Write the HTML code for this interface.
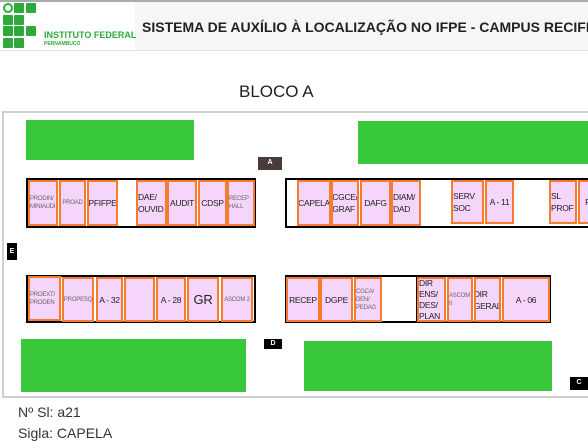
<!DOCTYPE html>
<html><head><meta charset="utf-8"><style>
*{margin:0;padding:0;box-sizing:border-box}
body{width:588px;height:440px;overflow:hidden;background:#fff;font-family:"Liberation Sans",Arial,sans-serif;position:relative}
.a{position:absolute}
.g{position:absolute;background:#38c83a}
.r{position:absolute;background:#f5d5f9;border:2px solid #f47c2c;display:flex;align-items:center;justify-content:center;text-align:left;color:#222;font-size:8.5px;letter-spacing:-0.3px;line-height:12px;overflow:hidden;white-space:normal}
.n{white-space:nowrap}
.s{font-size:6px;line-height:8px;color:#666;letter-spacing:-0.2px}
.b{position:absolute;border:2px solid #000;background:#fff}
.sq{position:absolute;width:10px;height:10px;background:#2eaa3a;border-radius:1px}
.lbl{position:absolute;color:#fff;font-size:7px;font-weight:bold;text-align:center;line-height:12px}
</style></head><body>
<div class="a" style="left:0;top:0;width:588px;height:2px;background:#aaa"></div>
<div class="a" style="left:135px;top:2px;width:453px;height:48px;background:#f6f6f6"></div>
<div class="a" style="left:0;top:50px;width:588px;height:1px;background:#e2e2e2"></div>
<div class="a" style="left:3px;top:3px;width:10px;height:10px;border:2px solid #2eaa3a;border-radius:50%"></div>
<div class="sq" style="left:14px;top:3px"></div><div class="sq" style="left:26px;top:3px"></div>
<div class="sq" style="left:3px;top:15px"></div><div class="sq" style="left:14px;top:15px"></div>
<div class="sq" style="left:3px;top:26px"></div><div class="sq" style="left:14px;top:26px"></div><div class="sq" style="left:26px;top:26px"></div>
<div class="sq" style="left:3px;top:38px"></div><div class="sq" style="left:14px;top:38px"></div>
<div class="a" style="left:44px;top:30px;font-size:9px;font-weight:bold;color:#2eaa3a">INSTITUTO FEDERAL</div>
<div class="a" style="left:44px;top:41px;font-size:5px;font-weight:bold;color:#2eaa3a">PERNAMBUCO</div>
<div class="a" style="left:142px;top:19px;font-size:14px;font-weight:bold;color:#222;white-space:nowrap">SISTEMA DE AUXÍLIO À LOCALIZAÇÃO NO IFPE - CAMPUS RECIFE</div>
<div class="a" style="left:239px;top:82px;font-size:17px;color:#222">BLOCO A</div>
<div class="a" style="left:2px;top:111px;width:600px;height:287px;border:2px solid #d0d0d0;border-right:none"></div>
<div class="g" style="left:26px;top:120px;width:168px;height:40px"></div>
<div class="g" style="left:358px;top:121px;width:230px;height:43px"></div>
<div class="g" style="left:21px;top:339px;width:225px;height:53px"></div>
<div class="g" style="left:304px;top:341px;width:248px;height:50px"></div>
<div class="lbl" style="left:258px;top:157px;width:24px;height:13px;background:#4a3d39">A</div>
<div class="lbl" style="left:7px;top:243px;width:10px;height:17px;background:#000;line-height:17px">E</div>
<div class="lbl" style="left:264px;top:339px;width:18px;height:10px;background:#000;line-height:10px">D</div>
<div class="lbl" style="left:570px;top:377px;width:18px;height:13px;background:#000">C</div>
<!-- top left -->
<div class="b" style="left:26px;top:178px;width:230px;height:50px"></div>
<div class="r s" style="left:28px;top:180px;width:30px;height:46px">PRODIN/ MINIAUDI</div>
<div class="r s" style="left:59px;top:180px;width:27px;height:46px">PROAD</div>
<div class="r n" style="left:87px;top:180px;width:31px;height:46px">PFIFPE</div>
<div class="r" style="left:136px;top:180px;width:31px;height:46px">DAE/ OUVID</div>
<div class="r n" style="left:167px;top:180px;width:30px;height:46px">AUDIT</div>
<div class="r n" style="left:198px;top:180px;width:29px;height:46px">CDSP</div>
<div class="r s" style="left:227px;top:180px;width:28px;height:46px">RECEP HALL</div>
<!-- top right -->
<div class="b" style="left:285px;top:178px;width:310px;height:50px"></div>
<div class="r n" style="left:297px;top:180px;width:34px;height:46px">CAPELA</div>
<div class="r" style="left:331px;top:180px;width:28px;height:46px">CGCE/ GRAF</div>
<div class="r n" style="left:360px;top:180px;width:31px;height:46px">DAFG</div>
<div class="r" style="left:391px;top:180px;width:30px;height:46px">DIAM/ DAD</div>
<div class="r" style="left:451px;top:180px;width:33px;height:44px">SERV SOC</div>
<div class="r n" style="left:485px;top:180px;width:29px;height:44px">A - 11</div>
<div class="r" style="left:549px;top:180px;width:28px;height:44px">SL PROF</div>
<div class="r" style="left:578px;top:180px;width:20px;height:44px">R</div>
<!-- bottom left -->
<div class="b" style="left:26px;top:275px;width:230px;height:48px"></div>
<div class="r s" style="left:28px;top:276px;width:33px;height:45px">PROEXT/ PRODEN</div>
<div class="r s" style="left:62px;top:277px;width:32px;height:45px">PROPESQ</div>
<div class="r n" style="left:96px;top:277px;width:27px;height:45px">A - 32</div>
<div class="r" style="left:124px;top:277px;width:31px;height:45px"></div>
<div class="r n" style="left:156px;top:277px;width:30px;height:45px">A - 28</div>
<div class="r n" style="left:187px;top:277px;width:32px;height:45px;font-size:13px">GR</div>
<div class="r s" style="left:221px;top:277px;width:32px;height:45px">ASCOM 2</div>
<!-- bottom right -->
<div class="b" style="left:285px;top:275px;width:135px;height:48px"></div>
<div class="b" style="left:416px;top:275px;width:135px;height:48px"></div>
<div class="r n" style="left:286px;top:277px;width:34px;height:45px">RECEP</div>
<div class="r n" style="left:320px;top:277px;width:33px;height:45px">DGPE</div>
<div class="r s" style="left:354px;top:277px;width:28px;height:45px">CGCA/ DEN/ PEDAG</div>
<div class="r" style="left:417px;top:277px;width:29px;height:45px;line-height:11px">DIR ENS/ DES/ PLAN</div>
<div class="r s" style="left:447px;top:277px;width:26px;height:45px">ASCOM II</div>
<div class="r" style="left:474px;top:277px;width:27px;height:45px">DIR GERAL</div>
<div class="r n" style="left:502px;top:277px;width:48px;height:45px">A - 06</div>
<div class="a" style="left:18px;top:404px;font-size:14px;color:#333">Nº Sl: a21</div>
<div class="a" style="left:18px;top:425px;font-size:14px;color:#333">Sigla: CAPELA</div>
</body></html>
